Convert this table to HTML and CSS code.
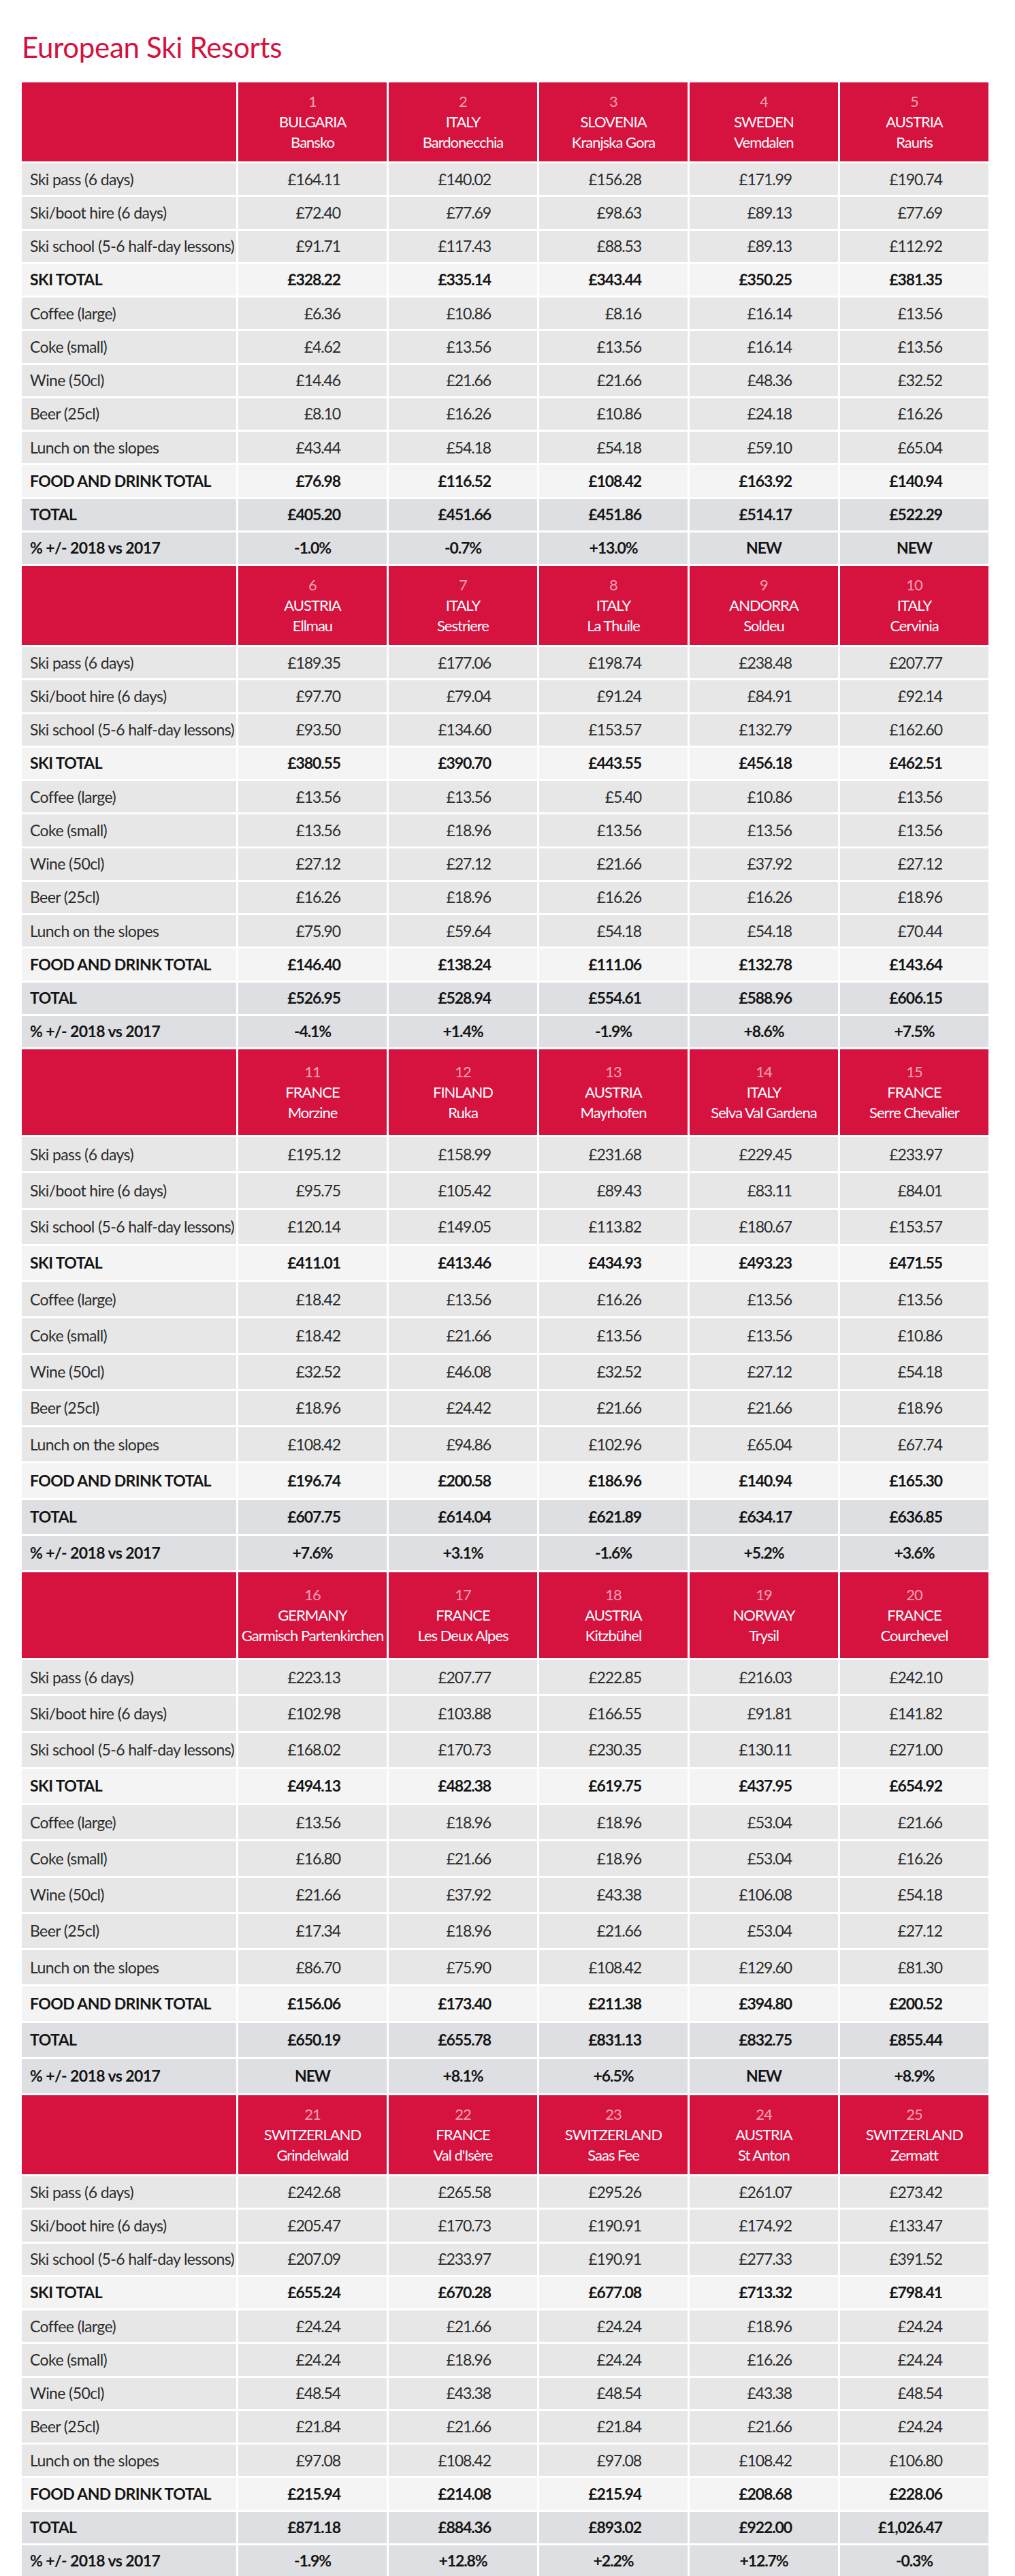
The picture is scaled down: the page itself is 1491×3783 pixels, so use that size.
FILE: index.html
```html
<!DOCTYPE html>
<html lang="en">
<head>
<meta charset="utf-8">
<title>European Ski Resorts</title>
<link rel="stylesheet" href="styles.css">
</head>
<body>
<h1 class="title">European Ski Resorts</h1>
<div class="table">

  <div class="sec">
    <div class="row head"><div class="c lab"></div>
      <div class="c h"><span class="n">1</span><span class="cty">BULGARIA</span><span>Bansko</span></div>
      <div class="c h"><span class="n">2</span><span class="cty">ITALY</span><span>Bardonecchia</span></div>
      <div class="c h"><span class="n">3</span><span class="cty">SLOVENIA</span><span>Kranjska Gora</span></div>
      <div class="c h"><span class="n">4</span><span class="cty">SWEDEN</span><span>Vemdalen</span></div>
      <div class="c h"><span class="n">5</span><span class="cty">AUSTRIA</span><span>Rauris</span></div>
    </div>
    <div class="row"><div class="c lab">Ski pass (6 days)</div><div class="c v">£164.11</div><div class="c v">£140.02</div><div class="c v">£156.28</div><div class="c v">£171.99</div><div class="c v">£190.74</div></div>
    <div class="row"><div class="c lab">Ski/boot hire (6 days)</div><div class="c v">£72.40</div><div class="c v">£77.69</div><div class="c v">£98.63</div><div class="c v">£89.13</div><div class="c v">£77.69</div></div>
    <div class="row"><div class="c lab">Ski school (5-6 half-day lessons)</div><div class="c v">£91.71</div><div class="c v">£117.43</div><div class="c v">£88.53</div><div class="c v">£89.13</div><div class="c v">£112.92</div></div>
    <div class="row sub"><div class="c lab">SKI TOTAL</div><div class="c v">£328.22</div><div class="c v">£335.14</div><div class="c v">£343.44</div><div class="c v">£350.25</div><div class="c v">£381.35</div></div>
    <div class="row"><div class="c lab">Coffee (large)</div><div class="c v">£6.36</div><div class="c v">£10.86</div><div class="c v">£8.16</div><div class="c v">£16.14</div><div class="c v">£13.56</div></div>
    <div class="row"><div class="c lab">Coke (small)</div><div class="c v">£4.62</div><div class="c v">£13.56</div><div class="c v">£13.56</div><div class="c v">£16.14</div><div class="c v">£13.56</div></div>
    <div class="row"><div class="c lab">Wine (50cl)</div><div class="c v">£14.46</div><div class="c v">£21.66</div><div class="c v">£21.66</div><div class="c v">£48.36</div><div class="c v">£32.52</div></div>
    <div class="row"><div class="c lab">Beer (25cl)</div><div class="c v">£8.10</div><div class="c v">£16.26</div><div class="c v">£10.86</div><div class="c v">£24.18</div><div class="c v">£16.26</div></div>
    <div class="row"><div class="c lab">Lunch on the slopes</div><div class="c v">£43.44</div><div class="c v">£54.18</div><div class="c v">£54.18</div><div class="c v">£59.10</div><div class="c v">£65.04</div></div>
    <div class="row sub"><div class="c lab">FOOD AND DRINK TOTAL</div><div class="c v">£76.98</div><div class="c v">£116.52</div><div class="c v">£108.42</div><div class="c v">£163.92</div><div class="c v">£140.94</div></div>
    <div class="row tot"><div class="c lab">TOTAL</div><div class="c v">£405.20</div><div class="c v">£451.66</div><div class="c v">£451.86</div><div class="c v">£514.17</div><div class="c v">£522.29</div></div>
    <div class="row tot pct"><div class="c lab">% +/- 2018 vs 2017</div><div class="c v">-1.0%</div><div class="c v">-0.7%</div><div class="c v">+13.0%</div><div class="c v">NEW</div><div class="c v">NEW</div></div>
  </div>

  <div class="sec">
    <div class="row head"><div class="c lab"></div>
      <div class="c h"><span class="n">6</span><span class="cty">AUSTRIA</span><span>Ellmau</span></div>
      <div class="c h"><span class="n">7</span><span class="cty">ITALY</span><span>Sestriere</span></div>
      <div class="c h"><span class="n">8</span><span class="cty">ITALY</span><span>La Thuile</span></div>
      <div class="c h"><span class="n">9</span><span class="cty">ANDORRA</span><span>Soldeu</span></div>
      <div class="c h"><span class="n">10</span><span class="cty">ITALY</span><span>Cervinia</span></div>
    </div>
    <div class="row"><div class="c lab">Ski pass (6 days)</div><div class="c v">£189.35</div><div class="c v">£177.06</div><div class="c v">£198.74</div><div class="c v">£238.48</div><div class="c v">£207.77</div></div>
    <div class="row"><div class="c lab">Ski/boot hire (6 days)</div><div class="c v">£97.70</div><div class="c v">£79.04</div><div class="c v">£91.24</div><div class="c v">£84.91</div><div class="c v">£92.14</div></div>
    <div class="row"><div class="c lab">Ski school (5-6 half-day lessons)</div><div class="c v">£93.50</div><div class="c v">£134.60</div><div class="c v">£153.57</div><div class="c v">£132.79</div><div class="c v">£162.60</div></div>
    <div class="row sub"><div class="c lab">SKI TOTAL</div><div class="c v">£380.55</div><div class="c v">£390.70</div><div class="c v">£443.55</div><div class="c v">£456.18</div><div class="c v">£462.51</div></div>
    <div class="row"><div class="c lab">Coffee (large)</div><div class="c v">£13.56</div><div class="c v">£13.56</div><div class="c v">£5.40</div><div class="c v">£10.86</div><div class="c v">£13.56</div></div>
    <div class="row"><div class="c lab">Coke (small)</div><div class="c v">£13.56</div><div class="c v">£18.96</div><div class="c v">£13.56</div><div class="c v">£13.56</div><div class="c v">£13.56</div></div>
    <div class="row"><div class="c lab">Wine (50cl)</div><div class="c v">£27.12</div><div class="c v">£27.12</div><div class="c v">£21.66</div><div class="c v">£37.92</div><div class="c v">£27.12</div></div>
    <div class="row"><div class="c lab">Beer (25cl)</div><div class="c v">£16.26</div><div class="c v">£18.96</div><div class="c v">£16.26</div><div class="c v">£16.26</div><div class="c v">£18.96</div></div>
    <div class="row"><div class="c lab">Lunch on the slopes</div><div class="c v">£75.90</div><div class="c v">£59.64</div><div class="c v">£54.18</div><div class="c v">£54.18</div><div class="c v">£70.44</div></div>
    <div class="row sub"><div class="c lab">FOOD AND DRINK TOTAL</div><div class="c v">£146.40</div><div class="c v">£138.24</div><div class="c v">£111.06</div><div class="c v">£132.78</div><div class="c v">£143.64</div></div>
    <div class="row tot"><div class="c lab">TOTAL</div><div class="c v">£526.95</div><div class="c v">£528.94</div><div class="c v">£554.61</div><div class="c v">£588.96</div><div class="c v">£606.15</div></div>
    <div class="row tot pct"><div class="c lab">% +/- 2018 vs 2017</div><div class="c v">-4.1%</div><div class="c v">+1.4%</div><div class="c v">-1.9%</div><div class="c v">+8.6%</div><div class="c v">+7.5%</div></div>
  </div>

  <div class="sec tall">
    <div class="row head"><div class="c lab"></div>
      <div class="c h"><span class="n">11</span><span class="cty">FRANCE</span><span>Morzine</span></div>
      <div class="c h"><span class="n">12</span><span class="cty">FINLAND</span><span>Ruka</span></div>
      <div class="c h"><span class="n">13</span><span class="cty">AUSTRIA</span><span>Mayrhofen</span></div>
      <div class="c h"><span class="n">14</span><span class="cty">ITALY</span><span>Selva Val Gardena</span></div>
      <div class="c h"><span class="n">15</span><span class="cty">FRANCE</span><span>Serre Chevalier</span></div>
    </div>
    <div class="row"><div class="c lab">Ski pass (6 days)</div><div class="c v">£195.12</div><div class="c v">£158.99</div><div class="c v">£231.68</div><div class="c v">£229.45</div><div class="c v">£233.97</div></div>
    <div class="row"><div class="c lab">Ski/boot hire (6 days)</div><div class="c v">£95.75</div><div class="c v">£105.42</div><div class="c v">£89.43</div><div class="c v">£83.11</div><div class="c v">£84.01</div></div>
    <div class="row"><div class="c lab">Ski school (5-6 half-day lessons)</div><div class="c v">£120.14</div><div class="c v">£149.05</div><div class="c v">£113.82</div><div class="c v">£180.67</div><div class="c v">£153.57</div></div>
    <div class="row sub"><div class="c lab">SKI TOTAL</div><div class="c v">£411.01</div><div class="c v">£413.46</div><div class="c v">£434.93</div><div class="c v">£493.23</div><div class="c v">£471.55</div></div>
    <div class="row"><div class="c lab">Coffee (large)</div><div class="c v">£18.42</div><div class="c v">£13.56</div><div class="c v">£16.26</div><div class="c v">£13.56</div><div class="c v">£13.56</div></div>
    <div class="row"><div class="c lab">Coke (small)</div><div class="c v">£18.42</div><div class="c v">£21.66</div><div class="c v">£13.56</div><div class="c v">£13.56</div><div class="c v">£10.86</div></div>
    <div class="row"><div class="c lab">Wine (50cl)</div><div class="c v">£32.52</div><div class="c v">£46.08</div><div class="c v">£32.52</div><div class="c v">£27.12</div><div class="c v">£54.18</div></div>
    <div class="row"><div class="c lab">Beer (25cl)</div><div class="c v">£18.96</div><div class="c v">£24.42</div><div class="c v">£21.66</div><div class="c v">£21.66</div><div class="c v">£18.96</div></div>
    <div class="row"><div class="c lab">Lunch on the slopes</div><div class="c v">£108.42</div><div class="c v">£94.86</div><div class="c v">£102.96</div><div class="c v">£65.04</div><div class="c v">£67.74</div></div>
    <div class="row sub"><div class="c lab">FOOD AND DRINK TOTAL</div><div class="c v">£196.74</div><div class="c v">£200.58</div><div class="c v">£186.96</div><div class="c v">£140.94</div><div class="c v">£165.30</div></div>
    <div class="row tot"><div class="c lab">TOTAL</div><div class="c v">£607.75</div><div class="c v">£614.04</div><div class="c v">£621.89</div><div class="c v">£634.17</div><div class="c v">£636.85</div></div>
    <div class="row tot pct"><div class="c lab">% +/- 2018 vs 2017</div><div class="c v">+7.6%</div><div class="c v">+3.1%</div><div class="c v">-1.6%</div><div class="c v">+5.2%</div><div class="c v">+3.6%</div></div>
  </div>

  <div class="sec tall">
    <div class="row head"><div class="c lab"></div>
      <div class="c h"><span class="n">16</span><span class="cty">GERMANY</span><span>Garmisch Partenkirchen</span></div>
      <div class="c h"><span class="n">17</span><span class="cty">FRANCE</span><span>Les Deux Alpes</span></div>
      <div class="c h"><span class="n">18</span><span class="cty">AUSTRIA</span><span>Kitzbühel</span></div>
      <div class="c h"><span class="n">19</span><span class="cty">NORWAY</span><span>Trysil</span></div>
      <div class="c h"><span class="n">20</span><span class="cty">FRANCE</span><span>Courchevel</span></div>
    </div>
    <div class="row"><div class="c lab">Ski pass (6 days)</div><div class="c v">£223.13</div><div class="c v">£207.77</div><div class="c v">£222.85</div><div class="c v">£216.03</div><div class="c v">£242.10</div></div>
    <div class="row"><div class="c lab">Ski/boot hire (6 days)</div><div class="c v">£102.98</div><div class="c v">£103.88</div><div class="c v">£166.55</div><div class="c v">£91.81</div><div class="c v">£141.82</div></div>
    <div class="row"><div class="c lab">Ski school (5-6 half-day lessons)</div><div class="c v">£168.02</div><div class="c v">£170.73</div><div class="c v">£230.35</div><div class="c v">£130.11</div><div class="c v">£271.00</div></div>
    <div class="row sub"><div class="c lab">SKI TOTAL</div><div class="c v">£494.13</div><div class="c v">£482.38</div><div class="c v">£619.75</div><div class="c v">£437.95</div><div class="c v">£654.92</div></div>
    <div class="row"><div class="c lab">Coffee (large)</div><div class="c v">£13.56</div><div class="c v">£18.96</div><div class="c v">£18.96</div><div class="c v">£53.04</div><div class="c v">£21.66</div></div>
    <div class="row"><div class="c lab">Coke (small)</div><div class="c v">£16.80</div><div class="c v">£21.66</div><div class="c v">£18.96</div><div class="c v">£53.04</div><div class="c v">£16.26</div></div>
    <div class="row"><div class="c lab">Wine (50cl)</div><div class="c v">£21.66</div><div class="c v">£37.92</div><div class="c v">£43.38</div><div class="c v">£106.08</div><div class="c v">£54.18</div></div>
    <div class="row"><div class="c lab">Beer (25cl)</div><div class="c v">£17.34</div><div class="c v">£18.96</div><div class="c v">£21.66</div><div class="c v">£53.04</div><div class="c v">£27.12</div></div>
    <div class="row"><div class="c lab">Lunch on the slopes</div><div class="c v">£86.70</div><div class="c v">£75.90</div><div class="c v">£108.42</div><div class="c v">£129.60</div><div class="c v">£81.30</div></div>
    <div class="row sub"><div class="c lab">FOOD AND DRINK TOTAL</div><div class="c v">£156.06</div><div class="c v">£173.40</div><div class="c v">£211.38</div><div class="c v">£394.80</div><div class="c v">£200.52</div></div>
    <div class="row tot"><div class="c lab">TOTAL</div><div class="c v">£650.19</div><div class="c v">£655.78</div><div class="c v">£831.13</div><div class="c v">£832.75</div><div class="c v">£855.44</div></div>
    <div class="row tot pct"><div class="c lab">% +/- 2018 vs 2017</div><div class="c v">NEW</div><div class="c v">+8.1%</div><div class="c v">+6.5%</div><div class="c v">NEW</div><div class="c v">+8.9%</div></div>
  </div>

  <div class="sec">
    <div class="row head"><div class="c lab"></div>
      <div class="c h"><span class="n">21</span><span class="cty">SWITZERLAND</span><span>Grindelwald</span></div>
      <div class="c h"><span class="n">22</span><span class="cty">FRANCE</span><span>Val d'Isère</span></div>
      <div class="c h"><span class="n">23</span><span class="cty">SWITZERLAND</span><span>Saas Fee</span></div>
      <div class="c h"><span class="n">24</span><span class="cty">AUSTRIA</span><span>St Anton</span></div>
      <div class="c h"><span class="n">25</span><span class="cty">SWITZERLAND</span><span>Zermatt</span></div>
    </div>
    <div class="row"><div class="c lab">Ski pass (6 days)</div><div class="c v">£242.68</div><div class="c v">£265.58</div><div class="c v">£295.26</div><div class="c v">£261.07</div><div class="c v">£273.42</div></div>
    <div class="row"><div class="c lab">Ski/boot hire (6 days)</div><div class="c v">£205.47</div><div class="c v">£170.73</div><div class="c v">£190.91</div><div class="c v">£174.92</div><div class="c v">£133.47</div></div>
    <div class="row"><div class="c lab">Ski school (5-6 half-day lessons)</div><div class="c v">£207.09</div><div class="c v">£233.97</div><div class="c v">£190.91</div><div class="c v">£277.33</div><div class="c v">£391.52</div></div>
    <div class="row sub"><div class="c lab">SKI TOTAL</div><div class="c v">£655.24</div><div class="c v">£670.28</div><div class="c v">£677.08</div><div class="c v">£713.32</div><div class="c v">£798.41</div></div>
    <div class="row"><div class="c lab">Coffee (large)</div><div class="c v">£24.24</div><div class="c v">£21.66</div><div class="c v">£24.24</div><div class="c v">£18.96</div><div class="c v">£24.24</div></div>
    <div class="row"><div class="c lab">Coke (small)</div><div class="c v">£24.24</div><div class="c v">£18.96</div><div class="c v">£24.24</div><div class="c v">£16.26</div><div class="c v">£24.24</div></div>
    <div class="row"><div class="c lab">Wine (50cl)</div><div class="c v">£48.54</div><div class="c v">£43.38</div><div class="c v">£48.54</div><div class="c v">£43.38</div><div class="c v">£48.54</div></div>
    <div class="row"><div class="c lab">Beer (25cl)</div><div class="c v">£21.84</div><div class="c v">£21.66</div><div class="c v">£21.84</div><div class="c v">£21.66</div><div class="c v">£24.24</div></div>
    <div class="row"><div class="c lab">Lunch on the slopes</div><div class="c v">£97.08</div><div class="c v">£108.42</div><div class="c v">£97.08</div><div class="c v">£108.42</div><div class="c v">£106.80</div></div>
    <div class="row sub"><div class="c lab">FOOD AND DRINK TOTAL</div><div class="c v">£215.94</div><div class="c v">£214.08</div><div class="c v">£215.94</div><div class="c v">£208.68</div><div class="c v">£228.06</div></div>
    <div class="row tot"><div class="c lab">TOTAL</div><div class="c v">£871.18</div><div class="c v">£884.36</div><div class="c v">£893.02</div><div class="c v">£922.00</div><div class="c v">£1,026.47</div></div>
    <div class="row tot pct"><div class="c lab">% +/- 2018 vs 2017</div><div class="c v">-1.9%</div><div class="c v">+12.8%</div><div class="c v">+2.2%</div><div class="c v">+12.7%</div><div class="c v">-0.3%</div></div>
  </div>

</div>
</body>
</html>
```

FILE: styles.css
```css
html, body {
  margin: 0;
  padding: 0;
  background: #ffffff;
}

body {
  font-family: Lato, "Liberation Sans", sans-serif;
  color: #2a2a2a;
}

.title {
  margin: 48px 0 31px 32px;
  font-size: 42px;
  line-height: 42px;
  font-weight: 400;
  color: #d4123f;
  letter-spacing: -0.3px;
}

.table {
  margin-left: 32px;
  width: 1420px;
  display: flex;
  flex-direction: column;
  gap: 3px;
}

.sec {
  display: flex;
  flex-direction: column;
  gap: 3px;
}

.row {
  display: grid;
  grid-template-columns: 315px repeat(5, 218px);
  column-gap: 3px;
  height: 46.25px;
}

.sec.tall .row {
  height: 50.25px;
}

.row.head {
  height: 116px;
}

.sec.tall .row.head {
  height: 126px;
}

.c {
  display: flex;
  align-items: center;
  background: #e7e7e7;
  font-size: 23px;
  line-height: 1;
  letter-spacing: -0.6px;
  white-space: nowrap;
}

.lab {
  padding-left: 12px;
  color: #2c2c2c;
}

.v {
  justify-content: flex-end;
  padding-right: 68px;
  color: #2c2c2c;
  letter-spacing: -1.1px;
}

.row.sub .c {
  background: #f4f4f4;
  font-weight: 700;
  color: #151515;
}

.row.tot .c {
  background: #dedfe2;
  font-weight: 700;
  color: #151515;
}

.row.pct .v {
  justify-content: center;
  padding-right: 0;
}

.row.head .c {
  background: #d6123f;
}

.h {
  flex-direction: column;
  justify-content: center;
  color: #ffffff;
  font-size: 22px;
  line-height: 30px;
  letter-spacing: -1px;
  text-align: center;
}

.h span {
  display: block;
}

.h .n {
  color: #f4a3b3;
}
```
